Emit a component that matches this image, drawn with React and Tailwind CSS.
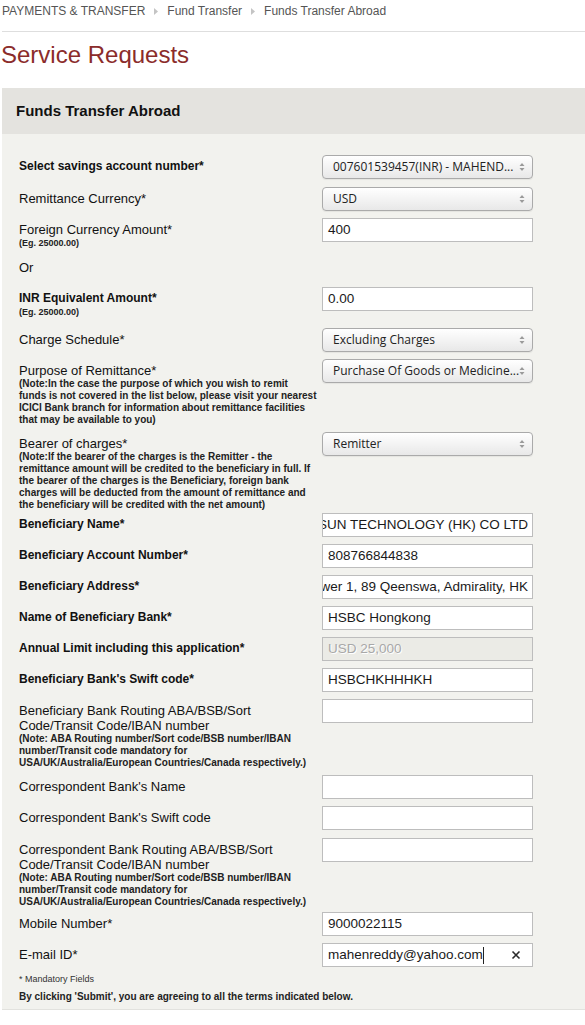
import React from 'react';

const SelectArrows = () => (
  <svg width="6" height="10" viewBox="0 0 6 10" className="shrink-0">
    <path d="M0.5 4 L3 1 L5.5 4 Z" fill="#9a9a9a" />
    <path d="M0.5 6 L3 9 L5.5 6 Z" fill="#9a9a9a" />
  </svg>
);

const SelectBox = ({ value }) => (
  <div className="flex h-[24px] w-[211px] items-center rounded-[4px] border border-[#aaaaaa] bg-linear-to-b from-white to-[#e8e8e8] pl-[10px] pr-[7px] shadow-[0_1px_1px_rgba(0,0,0,0.06)]">
    <span className="flex-1 overflow-hidden whitespace-nowrap font-['Open_Sans',sans-serif] text-[12px] text-[#222]">
      {value}
    </span>
    <SelectArrows />
  </div>
);

const TextBox = ({ value, disabled, alignEnd, email }) => (
  <div
    className={`flex h-[24px] w-[211px] items-center overflow-hidden whitespace-nowrap border border-[#bdbdbd] pl-[5px] pr-[4px] text-[13.5px] ${
      disabled ? 'bg-[#ebebe6] text-[#a8a8a8] [text-shadow:1px_1px_0_#fff]' : 'bg-white text-[#1a1a1a]'
    } ${alignEnd ? 'justify-end' : ''}`}
  >
    <span className="shrink-0">{value}</span>
    {email && (
      <>
        <span className="h-[17px] w-px shrink-0 bg-[#222]" />
        <svg width="10" height="10" viewBox="0 0 10 10" className="ml-auto mr-[7px] shrink-0">
          <path d="M1.5 1.5 L8.5 8.5 M8.5 1.5 L1.5 8.5" stroke="#2a2a2a" strokeWidth="1.6" />
        </svg>
      </>
    )}
  </div>
);

const routingNote = [
  '(Note: ABA Routing number/Sort code/BSB number/IBAN',
  'number/Transit code mandatory for',
  'USA/UK/Australia/European Countries/Canada respectively.)',
];

const rows = [
  { label: 'Select savings account number*', bold: true, select: '007601539457(INR) - MAHEND...', h: 'h-[32px]' },
  { label: 'Remittance Currency*', select: 'USD', h: 'h-[31px]' },
  { label: 'Foreign Currency Amount*', sub: '(Eg. 25000.00)', input: '400', h: 'h-[38px]' },
  { label: 'Or', h: 'h-[31px]' },
  { label: 'INR Equivalent Amount*', bold: true, sub: '(Eg. 25000.00)', input: '0.00', h: 'h-[41px]' },
  { label: 'Charge Schedule*', select: 'Excluding Charges', h: 'h-[31px]' },
  {
    label: 'Purpose of Remittance*',
    select: 'Purchase Of Goods or Medicine...',
    h: 'h-[73px]',
    notes: [
      '(Note:In the case the purpose of which you wish to remit',
      'funds is not covered in the list below, please visit your nearest',
      'ICICI Bank branch for information about remittance facilities',
      'that may be available to you)',
    ],
  },
  {
    label: 'Bearer of charges*',
    select: 'Remitter',
    h: 'h-[81px]',
    notes: [
      '(Note:If the bearer of the charges is the Remitter - the',
      'remittance amount will be credited to the beneficiary in full. If',
      'the bearer of the charges is the Beneficiary, foreign bank',
      'charges will be deducted from the amount of remittance and',
      'the beneficiary will be credited with the net amount)',
    ],
  },
  { label: 'Beneficiary Name*', bold: true, input: 'SUN TECHNOLOGY (HK) CO LTD', alignEnd: true, h: 'h-[31px]' },
  { label: 'Beneficiary Account Number*', bold: true, input: '808766844838', h: 'h-[31px]' },
  { label: 'Beneficiary Address*', bold: true, input: 'Lippo Centre Tower 1, 89 Qeenswa, Admirality, HK', alignEnd: true, h: 'h-[31px]' },
  { label: 'Name of Beneficiary Bank*', bold: true, input: 'HSBC Hongkong', h: 'h-[31px]' },
  { label: 'Annual Limit including this application*', bold: true, input: 'USD 25,000', disabled: true, h: 'h-[31px]' },
  { label: "Beneficiary Bank's Swift code*", bold: true, input: 'HSBCHKHHHKH', h: 'h-[31px]' },
  {
    label: 'Beneficiary Bank Routing ABA/BSB/Sort Code/Transit Code/IBAN number',
    input: '',
    h: 'h-[76px]',
    notes: routingNote,
  },
  { label: "Correspondent Bank's Name", input: '', h: 'h-[31px]' },
  { label: "Correspondent Bank's Swift code", input: '', h: 'h-[32px]' },
  {
    label: 'Correspondent Bank Routing ABA/BSB/Sort Code/Transit Code/IBAN number',
    input: '',
    h: 'h-[74px]',
    notes: routingNote,
  },
  { label: 'Mobile Number*', input: '9000022115', h: 'h-[31px]' },
  { label: 'E-mail ID*', input: 'mahenreddy@yahoo.com', email: true, h: 'h-[30px]' },
];

const Crumb = () => (
  <svg width="4" height="7" viewBox="0 0 4 7" className="mx-[9px]">
    <path d="M0 0 L4 3.5 L0 7 Z" fill="#c4c4c4" />
  </svg>
);

export default function App() {
  return (
    <div className="min-h-[1025px] w-full overflow-hidden bg-white font-['Liberation_Sans',Arial,sans-serif]">
      {/* Breadcrumb */}
      <div className="flex h-[22px] items-center pl-[2px] text-[12px] text-[#555]">
        <span>PAYMENTS &amp; TRANSFER</span>
        <Crumb />
        <span>Fund Transfer</span>
        <Crumb />
        <span>Funds Transfer Abroad</span>
      </div>
      <div className="ml-[2px] mt-[9px] h-px bg-[#dedede]" />

      <h1 className="ml-[1px] mt-[9px] text-[24px] leading-[28px] text-[#8b2c2b]">Service Requests</h1>

      {/* Panel */}
      <div className="ml-[2px] mt-[19px] border-b border-[#e2e2de] bg-[#f2f2ee]">
        <div className="flex h-[46px] items-center bg-[#e4e3df] pl-[14px] text-[15px] font-bold text-[#111]">
          Funds Transfer Abroad
        </div>

        <div className="pl-[17px] pt-[21px] pb-[6px]">
          {rows.map((r) => (
            <div key={r.label} className={`flex ${r.h}`}>
              <div className="w-[303px] shrink-0 pr-[8px] pt-[4px]">
                <div
                  className={
                    r.bold
                      ? 'text-[12px] font-bold leading-[15px] text-[#111]'
                      : 'text-[13px] leading-[15px] text-[#111]'
                  }
                >
                  {r.label}
                </div>
                {r.sub && <div className="text-[9px] font-bold leading-[12px] text-[#222]">{r.sub}</div>}
                {r.notes &&
                  r.notes.map((n) => (
                    <div key={n} className="whitespace-nowrap text-[10px] font-bold leading-[12px] text-[#222]">
                      {n}
                    </div>
                  ))}
              </div>
              {r.select !== undefined && <SelectBox value={r.select} />}
              {r.input !== undefined && (
                <TextBox value={r.input} disabled={r.disabled} alignEnd={r.alignEnd} email={r.email} />
              )}
            </div>
          ))}

          <div className="text-[9px] leading-[12px] text-[#333]">* Mandatory Fields</div>
          <div className="mt-[6px] text-[10px] font-bold leading-[12px] text-[#222]">
            By clicking 'Submit', you are agreeing to all the terms indicated below.
          </div>
        </div>
      </div>
    </div>
  );
}
